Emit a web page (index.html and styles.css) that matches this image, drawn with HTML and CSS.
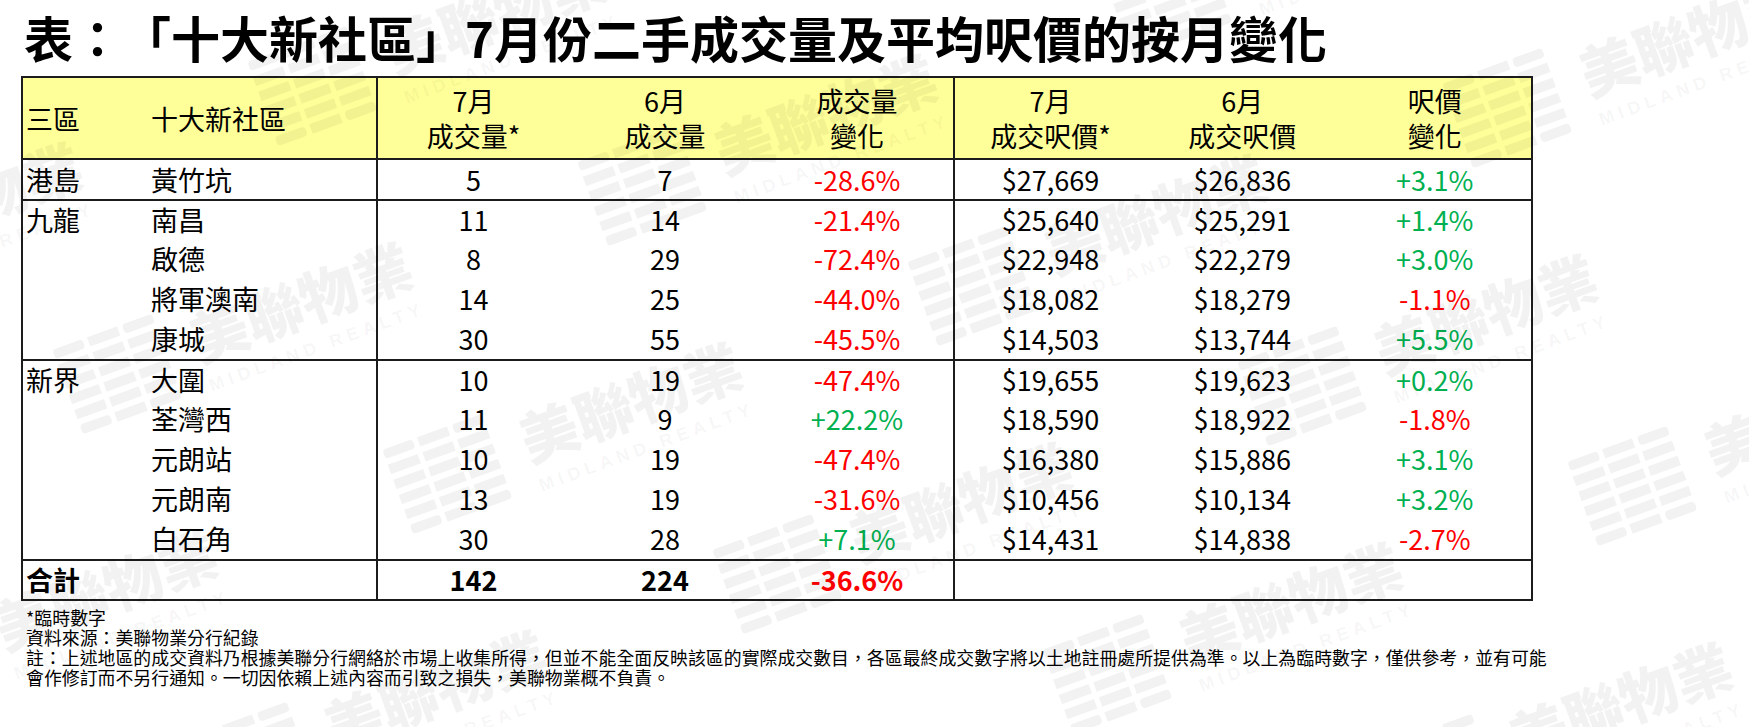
FILE: index.html
```html
<!DOCTYPE html>
<html lang="zh-Hant">
<head>
<meta charset="utf-8">
<title>十大新社區7月份二手成交量及平均呎價的按月變化</title>
<link rel="stylesheet" href="styles.css">
</head>
<body>
<svg class="defs" width="0" height="0" aria-hidden="true">
  <symbol id="mlogo" viewBox="0 0 106 96">
    <rect x="0" y="0" width="32" height="10" rx="4"/>
    <rect x="0" y="16" width="32" height="10"/>
    <rect x="0" y="32" width="32" height="10"/>
    <rect x="0" y="48" width="32" height="10"/>
    <rect x="0" y="64" width="32" height="10"/>
    <rect x="0" y="80" width="32" height="10" rx="4"/>
    <rect x="37" y="0" width="32" height="10"/>
    <rect x="37" y="16" width="32" height="10"/>
    <rect x="37" y="32" width="32" height="10"/>
    <rect x="37" y="48" width="32" height="10"/>
    <rect x="37" y="64" width="32" height="10"/>
    <rect x="37" y="80" width="32" height="10"/>
    <rect x="74" y="0" width="32" height="10" rx="4"/>
    <rect x="74" y="16" width="32" height="10"/>
    <rect x="74" y="32" width="32" height="10"/>
    <rect x="74" y="48" width="32" height="10"/>
    <rect x="74" y="64" width="32" height="10"/>
    <rect x="74" y="80" width="32" height="10" rx="4"/>
  </symbol>
</svg>
<main class="page">
  <h1 class="title">表：「十大新社區」7月份二手成交量及平均呎價的按月變化</h1>
  <table class="stats">
    <colgroup>
      <col class="col-region"><col class="col-name">
      <col class="col-a"><col class="col-b"><col class="col-b">
      <col class="col-a"><col class="col-c"><col class="col-c">
    </colgroup>
    <thead>
      <tr class="head-row">
        <th class="region">三區</th>
        <th class="name">十大新社區</th>
        <th class="num sep">7月<br>成交量*</th>
        <th class="num">6月<br>成交量</th>
        <th class="num">成交量<br>變化</th>
        <th class="num sep">7月<br>成交呎價*</th>
        <th class="num">6月<br>成交呎價</th>
        <th class="num">呎價<br>變化</th>
      </tr>
    </thead>
    <tbody>
      <tr class="row row-top">
        <td class="region">港島</td><td class="name">黃竹坑</td>
        <td class="num sep">5</td><td class="num">7</td><td class="num down">-28.6%</td>
        <td class="num sep">$27,669</td><td class="num">$26,836</td><td class="num up">+3.1%</td>
      </tr>
    </tbody>
    <tbody>
      <tr class="row first">
        <td class="region span" rowspan="4">九龍</td><td class="name">南昌</td>
        <td class="num sep">11</td><td class="num">14</td><td class="num down">-21.4%</td>
        <td class="num sep">$25,640</td><td class="num">$25,291</td><td class="num up">+1.4%</td>
      </tr>
      <tr class="row">
        <td class="name">啟德</td>
        <td class="num sep">8</td><td class="num">29</td><td class="num down">-72.4%</td>
        <td class="num sep">$22,948</td><td class="num">$22,279</td><td class="num up">+3.0%</td>
      </tr>
      <tr class="row">
        <td class="name">將軍澳南</td>
        <td class="num sep">14</td><td class="num">25</td><td class="num down">-44.0%</td>
        <td class="num sep">$18,082</td><td class="num">$18,279</td><td class="num down">-1.1%</td>
      </tr>
      <tr class="row">
        <td class="name">康城</td>
        <td class="num sep">30</td><td class="num">55</td><td class="num down">-45.5%</td>
        <td class="num sep">$14,503</td><td class="num">$13,744</td><td class="num up">+5.5%</td>
      </tr>
    </tbody>
    <tbody>
      <tr class="row first">
        <td class="region span" rowspan="5">新界</td><td class="name">大圍</td>
        <td class="num sep">10</td><td class="num">19</td><td class="num down">-47.4%</td>
        <td class="num sep">$19,655</td><td class="num">$19,623</td><td class="num up">+0.2%</td>
      </tr>
      <tr class="row">
        <td class="name">荃灣西</td>
        <td class="num sep">11</td><td class="num">9</td><td class="num up">+22.2%</td>
        <td class="num sep">$18,590</td><td class="num">$18,922</td><td class="num down">-1.8%</td>
      </tr>
      <tr class="row">
        <td class="name">元朗站</td>
        <td class="num sep">10</td><td class="num">19</td><td class="num down">-47.4%</td>
        <td class="num sep">$16,380</td><td class="num">$15,886</td><td class="num up">+3.1%</td>
      </tr>
      <tr class="row">
        <td class="name">元朗南</td>
        <td class="num sep">13</td><td class="num">19</td><td class="num down">-31.6%</td>
        <td class="num sep">$10,456</td><td class="num">$10,134</td><td class="num up">+3.2%</td>
      </tr>
      <tr class="row">
        <td class="name">白石角</td>
        <td class="num sep">30</td><td class="num">28</td><td class="num up">+7.1%</td>
        <td class="num sep">$14,431</td><td class="num">$14,838</td><td class="num down">-2.7%</td>
      </tr>
    </tbody>
    <tfoot>
      <tr class="row first total">
        <td class="region">合計</td><td class="name"></td>
        <td class="num sep">142</td><td class="num">224</td><td class="num down">-36.6%</td>
        <td class="num sep"></td><td class="num"></td><td class="num"></td>
      </tr>
    </tfoot>
  </table>
  <div class="notes">
    <p>*臨時數字</p>
    <p>資料來源：美聯物業分行紀錄</p>
    <p>註：上述地區的成交資料乃根據美聯分行網絡於市場上收集所得，但並不能全面反映該區的實際成交數目，各區最終成交數字將以土地註冊處所提供為準。以上為臨時數字，僅供參考，並有可能<br>會作修訂而不另行通知。一切因依賴上述內容而引致之損失，美聯物業概不負責。</p>
  </div>

  <div class="wm-layer" aria-hidden="true">
    <div class="wm wm-1"><svg class="wm-logo"><use href="#mlogo"/></svg><span class="wm-name">美聯物業</span><span class="wm-en">MIDLAND REALTY</span></div>
    <div class="wm wm-2"><svg class="wm-logo"><use href="#mlogo"/></svg><span class="wm-name">美聯物業</span><span class="wm-en">MIDLAND REALTY</span></div>
    <div class="wm wm-3"><svg class="wm-logo"><use href="#mlogo"/></svg><span class="wm-name">美聯物業</span><span class="wm-en">MIDLAND REALTY</span></div>
    <div class="wm wm-4"><svg class="wm-logo"><use href="#mlogo"/></svg><span class="wm-name">美聯物業</span><span class="wm-en">MIDLAND REALTY</span></div>
    <div class="wm wm-5"><svg class="wm-logo"><use href="#mlogo"/></svg><span class="wm-name">美聯物業</span><span class="wm-en">MIDLAND REALTY</span></div>
    <div class="wm wm-6"><svg class="wm-logo"><use href="#mlogo"/></svg><span class="wm-name">美聯物業</span><span class="wm-en">MIDLAND REALTY</span></div>
    <div class="wm wm-7"><svg class="wm-logo"><use href="#mlogo"/></svg><span class="wm-name">美聯物業</span><span class="wm-en">MIDLAND REALTY</span></div>
    <div class="wm wm-8"><svg class="wm-logo"><use href="#mlogo"/></svg><span class="wm-name">美聯物業</span><span class="wm-en">MIDLAND REALTY</span></div>
    <div class="wm wm-9"><svg class="wm-logo"><use href="#mlogo"/></svg><span class="wm-name">美聯物業</span><span class="wm-en">MIDLAND REALTY</span></div>
    <div class="wm wm-10"><svg class="wm-logo"><use href="#mlogo"/></svg><span class="wm-name">美聯物業</span><span class="wm-en">MIDLAND REALTY</span></div>
    <div class="wm wm-11"><svg class="wm-logo"><use href="#mlogo"/></svg><span class="wm-name">美聯物業</span><span class="wm-en">MIDLAND REALTY</span></div>
    <div class="wm wm-12"><svg class="wm-logo"><use href="#mlogo"/></svg><span class="wm-name">美聯物業</span><span class="wm-en">MIDLAND REALTY</span></div>
    <div class="wm wm-13"><svg class="wm-logo"><use href="#mlogo"/></svg><span class="wm-name">美聯物業</span><span class="wm-en">MIDLAND REALTY</span></div>
    <div class="wm wm-14"><svg class="wm-logo"><use href="#mlogo"/></svg><span class="wm-name">美聯物業</span><span class="wm-en">MIDLAND REALTY</span></div>
    <div class="wm wm-15"><svg class="wm-logo"><use href="#mlogo"/></svg><span class="wm-name">美聯物業</span><span class="wm-en">MIDLAND REALTY</span></div>
  </div>
</main>
</body>
</html>
```

FILE: styles.css
```css
html, body {
  margin: 0;
  padding: 0;
  background: #ffffff;
  overflow: hidden;
}

body {
  font-family: "Noto Sans CJK TC", "Noto Sans", sans-serif;
  color: #000000;
  text-spacing-trim: space-all;
}

.defs {
  position: absolute;
  width: 0;
  height: 0;
}

.page {
  position: relative;
  width: 1749px;
  height: 727px;
  padding-top: 12px;
  box-sizing: border-box;
  overflow: hidden;
}

.title {
  margin: 0 0 15px 24px;
  font-size: 49px;
  line-height: 49px;
  font-weight: 700;
  white-space: nowrap;
}

/* ---------- table ---------- */
.stats {
  margin-left: 21px;
  width: 1512px;
  table-layout: fixed;
  border-collapse: separate;
  border-spacing: 0;
  border: 2px solid #1c1c1c;
  font-size: 27px;
}

.col-region { width: 128px; }
.col-name { width: 225px; }
.col-a { width: 193px; }
.col-b { width: 192px; }
.col-c { width: 192.5px; }

.stats th,
.stats td {
  padding: 0;
  font-weight: 400;
  box-sizing: border-box;
}

.head-row {
  height: 82px;
}

.stats th {
  background: #ffff99;
  border-bottom: 2px solid #1c1c1c;
  line-height: 35px;
  vertical-align: middle;
}

.stats td {
  line-height: 38px;
  vertical-align: middle;
  white-space: nowrap;
}

.row { height: 40px; }
.row-top { height: 39px; }

.first > td {
  border-top: 2px solid #1c1c1c;
}

.region {
  text-align: left;
  padding-left: 3px !important;
}

.stats td.span {
  vertical-align: top;
}

.name { text-align: left; }
.num { text-align: center; }

.sep {
  border-left: 2px solid #1c1c1c;
}

.down { color: #ff0000; }
.up { color: #00b050; }

.stats .total td {
  font-weight: 700;
}

/* ---------- notes ---------- */
.notes {
  margin: 6px 0 0 26px;
  font-size: 17.9px;
  line-height: 20px;
}

.notes p {
  margin: 0;
  white-space: nowrap;
}

/* ---------- watermark ---------- */
.wm-layer {
  position: absolute;
  left: 0;
  top: 0;
  width: 100%;
  height: 100%;
  pointer-events: none;
  overflow: hidden;
  color: rgba(0, 0, 0, 0.05);
}

.wm {
  position: absolute;
  width: 0;
  height: 0;
  transform: rotate(-20deg);
  transform-origin: 0 0;
}

.wm-logo {
  position: absolute;
  left: -250px;
  top: -38px;
  width: 106px;
  height: 96px;
  fill: currentColor;
}

.wm-name {
  position: absolute;
  left: -130px;
  top: -36px;
  width: 260px;
  text-align: center;
  font-size: 58px;
  line-height: 72px;
  font-weight: 900;
  white-space: nowrap;
}

.wm-en {
  position: absolute;
  left: -140px;
  top: 38px;
  width: 280px;
  text-align: center;
  font-family: "Liberation Sans", sans-serif;
  font-size: 18px;
  line-height: 24px;
  font-weight: 700;
  letter-spacing: 5px;
  white-space: nowrap;
}

.wm-1 { left: 1690px; top: 34px; }
.wm-2 { left: 1350px; top: -76px; }
.wm-3 { left: 495px; top: 12px; }
.wm-4 { left: 825px; top: 112px; }
.wm-5 { left: 1155px; top: 212px; }
.wm-6 { left: 1485px; top: 312px; }
.wm-7 { left: 1815px; top: 412px; }
.wm-8 { left: -30px; top: 200px; }
.wm-9 { left: 300px; top: 300px; }
.wm-10 { left: 630px; top: 400px; }
.wm-11 { left: 960px; top: 500px; }
.wm-12 { left: 1290px; top: 600px; }
.wm-13 { left: 1620px; top: 700px; }
.wm-14 { left: 105px; top: 588px; }
.wm-15 { left: 435px; top: 688px; }
```
